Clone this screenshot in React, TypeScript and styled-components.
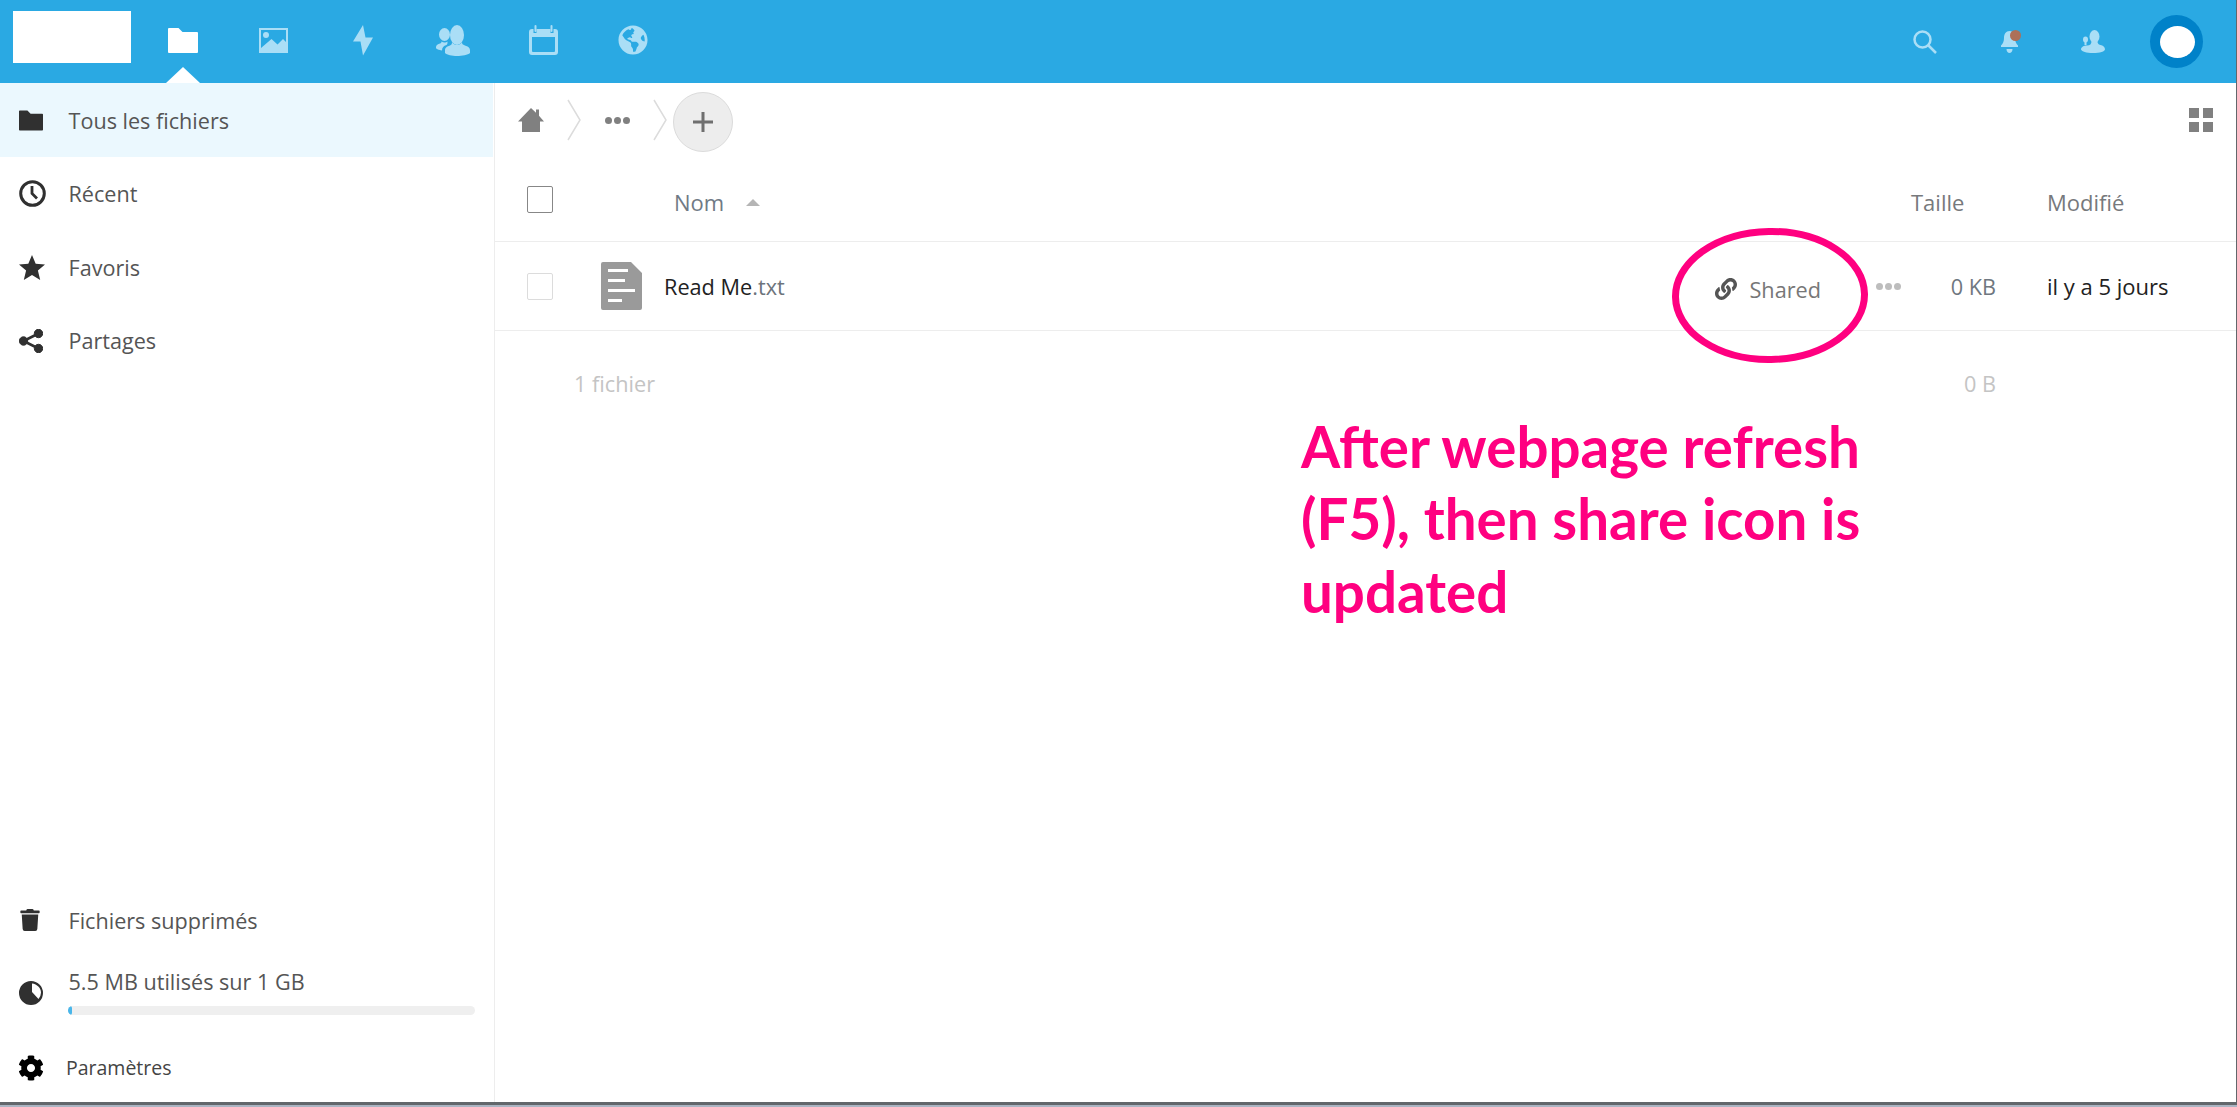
import React from 'react'
import styled, { createGlobalStyle } from 'styled-components'
import { FaCog, FaGlobeAmericas, FaLink, FaTrash } from 'react-icons/fa'

const GlobalStyle = createGlobalStyle`
  html, body {
    margin: 0;
    padding: 0;
    background: #fff;
  }
  * {
    box-sizing: border-box;
  }
`

const Page = styled.div`
  position: relative;
  width: 2237px;
  height: 1107px;
  overflow: hidden;
  display: flex;
  flex-direction: column;
  background: #aab4c2;
  font-family: 'Open Sans', 'Noto Sans', sans-serif;
`

const Window = styled.div`
  height: 1105px;
  display: flex;
  flex-direction: column;
  background: #fff;
  border-right: 1px solid #62676b;
  border-bottom: 3px solid #62676b;
`

const Header = styled.header`
  height: 83px;
  flex-shrink: 0;
  display: flex;
  align-items: center;
  background: #2aa9e3;
  padding-left: 13px;
  padding-right: 33px;
`

const Logo = styled.div`
  width: 118px;
  height: 52px;
  margin-top: -9px;
  margin-right: 7px;
  background: #fff;
`

const AppNav = styled.nav`
  display: flex;
  height: 100%;
`

const NavItem = styled.div<{ $active?: boolean }>`
  position: relative;
  width: 90px;
  height: 100%;
  display: flex;
  align-items: center;
  justify-content: center;
  padding-bottom: 3px;
  color: ${({ $active }) => ($active ? '#fff' : '#aadef6')};

  ${({ $active }) =>
    $active &&
    `
    &::after {
      content: '';
      position: absolute;
      left: 28px;
      bottom: 0;
      border-left: 17px solid transparent;
      border-right: 17px solid transparent;
      border-bottom: 16px solid #fff;
    }
  `}
`

const RightTools = styled.div`
  margin-left: auto;
  display: flex;
  align-items: center;
  color: #aadef6;
`

const ToolSlot = styled.div`
  position: relative;
  width: 84px;
  display: flex;
  justify-content: center;
`

const NotifyDot = styled.span`
  position: absolute;
  top: -1px;
  left: 43px;
  width: 11px;
  height: 11px;
  border-radius: 50%;
  background: #ad7058;
`

const Avatar = styled.div`
  width: 53px;
  height: 53px;
  margin-left: 15px;
  border-radius: 50%;
  background: #0082c9;
  display: flex;
  align-items: center;
  justify-content: center;

  &::before {
    content: '';
    width: 35px;
    height: 32px;
    margin-left: 2px;
    margin-top: 1px;
    border-radius: 50%;
    background: #fff;
  }
`

const Body = styled.div`
  flex: 1;
  display: flex;
  min-height: 0;
`

const Sidebar = styled.aside`
  width: 495px;
  flex-shrink: 0;
  display: flex;
  flex-direction: column;
  border-right: 1px solid #ededed;
`

const SideList = styled.div`
  display: flex;
  flex-direction: column;
  padding-right: 1px;
`

const SideItem = styled.div<{ $active?: boolean }>`
  height: ${({ $active }) => ($active ? 74 : 73.5)}px;
  display: flex;
  align-items: center;
  background: ${({ $active }) => ($active ? '#ebf8fe' : 'transparent')};
  color: #303030;
`

const SideIcon = styled.div`
  width: 68.5px;
  flex-shrink: 0;
  padding-left: 19px;
  display: flex;
  align-items: center;
  color: #303030;
`

const SideText = styled.span`
  font-size: 21.6px;
  color: #555;
  white-space: nowrap;
`

const SideFooter = styled.div`
  margin-top: auto;
  display: flex;
  flex-direction: column;
`

const TrashRow = styled(SideItem)`
  height: 52px;
`

const StorageRow = styled.div`
  display: flex;
  align-items: center;
  height: 70px;
  margin-top: 12px;
`

const StorageBody = styled.div`
  flex: 1;
  padding-right: 19px;
  margin-top: -5px;
`

const StorageBar = styled.div`
  height: 9px;
  margin-top: 10px;
  margin-left: -1px;
  border-radius: 5px;
  overflow: hidden;
  background: #efefef;
`

const StorageFill = styled.div`
  height: 100%;
  border-radius: 5px;
  background: #49b6ea;
`

const SettingsRow = styled.div`
  height: 54px;
  margin-top: 13px;
  margin-bottom: 7px;
  display: flex;
  align-items: center;
  padding-left: 18px;
  color: #000;
`

const SettingsText = styled.span`
  margin-left: 22px;
  margin-top: -2px;
  font-size: 19.5px;
  color: #444;
`

const Main = styled.main`
  flex: 1;
  min-width: 0;
  display: flex;
  flex-direction: column;
`

const Breadcrumb = styled.div`
  height: 74px;
  flex-shrink: 0;
  display: flex;
  align-items: center;
  padding-left: 23px;
  padding-right: 23px;
  color: #808080;
`

const Crumb = styled.div<{ $width: number }>`
  width: ${({ $width }) => $width}px;
  display: flex;
  align-items: center;
`

const CrumbDots = styled(Crumb)`
  padding-left: 24px;
`

const Dots = styled.div<{ $color?: string }>`
  display: flex;
  gap: 2px;

  & > span {
    width: 7px;
    height: 7px;
    border-radius: 50%;
    background: ${({ $color }) => $color ?? '#808080'};
  }
`

const AddButton = styled.div`
  width: 60px;
  height: 60px;
  margin-left: 6px;
  margin-top: 3px;
  border-radius: 50%;
  border: 1px solid #dbdbdb;
  background: #ededed;
  display: flex;
  align-items: center;
  justify-content: center;
  color: #6f6f6f;
`

const ViewToggle = styled.div`
  margin-left: auto;
  width: 24px;
  height: 24px;
  display: grid;
  grid-template-columns: 10px 10px;
  grid-template-rows: 10px 10px;
  gap: 4px;

  & > span {
    background: #808080;
  }
`

const TableRow = styled.div<{ $height: number }>`
  height: ${({ $height }) => $height}px;
  flex-shrink: 0;
  display: grid;
  grid-template-columns: 106px 1fr 95px 240px;
  align-items: center;
  border-bottom: 1px solid #ededed;
`

const CheckCell = styled.div`
  padding-left: 32px;
`

const Checkbox = styled.div<{ $strong?: boolean }>`
  width: 26px;
  height: 27px;
  border-radius: 2px;
  border: 1.5px solid ${({ $strong }) => ($strong ? '#878787' : '#dcdcdc')};
`

const NameHead = styled.div`
  display: flex;
  align-items: center;
  gap: 22px;
  padding: 5px 0 0 73px;
  font-size: 22px;
  color: #707a85;
`

const SortCaret = styled.span`
  margin-top: 2px;
  border-left: 7px solid transparent;
  border-right: 7px solid transparent;
  border-bottom: 7px solid #b5b5b5;
`

const ColHead = styled.div<{ $left: number }>`
  padding: 5px 0 0 ${({ $left }) => $left}px;
  font-size: 22px;
  color: #77797c;
  white-space: nowrap;
`

const NameCell = styled.div`
  display: flex;
  align-items: center;
  color: #9a9a9a;
`

const FileName = styled.span`
  margin-left: 22px;
  font-size: 21.7px;
  color: #222;
`

const Ext = styled.span`
  color: #6d747c;
`

const ShareAction = styled.div`
  margin-left: auto;
  margin-top: 6px;
  display: flex;
  align-items: center;
  gap: 12px;
  color: #555;
  font-size: 21.7px;
`

const ShareText = styled.span`
  color: #777;
`

const RowDots = styled.div`
  margin-left: 55px;
`

const SizeCell = styled.div<{ $muted?: boolean }>`
  text-align: right;
  font-size: 21.7px;
  color: ${({ $muted }) => ($muted ? '#c4c4c4' : '#6f7780')};
`

const DateCell = styled.div`
  padding-left: 51px;
  font-size: 22px;
  color: #222;
  white-space: nowrap;
`

const Summary = styled.div`
  height: 105px;
  display: grid;
  grid-template-columns: 79px 1327px 95px;
  align-items: center;
  font-size: 21.7px;
  color: #c4c4c4;
`

const SummaryCount = styled.div`
  grid-column: 2;
`

const Ring = styled.svg`
  position: absolute;
  left: 1660px;
  top: 220px;
  pointer-events: none;
`

const Note = styled.div`
  position: absolute;
  left: 1301px;
  top: 409.5px;
  width: 640px;
  font-family: Lato, 'Open Sans', sans-serif;
  font-size: 56.5px;
  font-weight: 700;
  line-height: 72.5px;
  color: #ff0080;
`

const FolderIcon = ({ w, h }: { w: number; h: number }) => (
  <svg width={w} height={h} viewBox="0 0 30 25" fill="currentColor">
    <path d="M1 0h9.500l4 4H29a1 1 0 0 1 1 1v19a1 1 0 0 1-1 1H1a1 1 0 0 1-1-1V1a1 1 0 0 1 1-1z" />
  </svg>
)

const ImageIcon = () => (
  <svg width="29" height="25" viewBox="0 0 29 25" fill="currentColor">
    <path fillRule="evenodd" d="M0 0h29v25H0zM2 2v18l10.500-9 6 5.500L24 11l3 3V2z" />
    <circle cx="7" cy="7" r="3" />
  </svg>
)

const BoltIcon = () => (
  <svg width="20" height="31" viewBox="0 0 20 31" fill="currentColor">
    <path d="M10 0 0 16.500h7.500l2.500 14L20 12.500h-7.500z" />
  </svg>
)

const ContactsIcon = () => (
  <svg width="34" height="31" viewBox="0 0 34 31" fill="currentColor">
    <ellipse cx="21" cy="10" rx="7" ry="10" />
    <path d="M16 17c1 2 3 3 5 3s4-1 5-3c0 2 .5 2.500 3 3.500 3 1.200 5 2 5 5v2.500c-2 2-8 3-13 3s-10-1-12-3v-2.500c0-3 2-3.800 5-5 2-1 2-2 2-4z" />
    <ellipse cx="8.500" cy="9.500" rx="5.500" ry="6.500" />
    <path d="M0 22c0-2 2-3 4-3.500 1-.3 1.500-1 1.500-2 1 .7 2 1 3 1 1.200 0 2-.3 3-1 0 2 0 2.500-1 3.500-3 1-4.500 2.500-4.500 5.500C3 25 0 24 0 23z" />
  </svg>
)

const UserAddIcon = () => (
  <svg width="24" height="23" viewBox="0 0 24 23" fill="currentColor">
    <ellipse cx="13.500" cy="6.500" rx="5" ry="6.500" />
    <ellipse cx="4.500" cy="9.500" rx="2.500" ry="3" />
    <path d="M3.500 12h2v3h-2z" />
    <path d="M10.500 11h6c0 2 .5 3.500 3 4 2.500.6 4.500 2 4.500 4.200 0 2.300-5 3.800-12 3.800S1 21.500 0 19.500C0 17 3 15.500 6 15.500c3 0 4.500-1.500 4.500-4.500z" />
  </svg>
)

const CalendarIcon = () => (
  <svg width="29" height="30" viewBox="0 0 29 30" fill="currentColor">
    <path fillRule="evenodd" d="M3 4h1.500v4h3V4h14v4h3V4H26a3 3 0 0 1 3 3v20a3 3 0 0 1-3 3H3a3 3 0 0 1-3-3V7a3 3 0 0 1 3-3zM3 12v14a1 1 0 0 0 1 1h21a1 1 0 0 0 1-1V12z" />
    <rect x="5.500" width="2" height="7" rx="1" />
    <rect x="21.500" width="2" height="7" rx="1" />
  </svg>
)

const SearchIcon = () => (
  <svg width="24" height="24" viewBox="0 0 24 24" fill="none" stroke="currentColor" strokeWidth="2.500">
    <circle cx="9.500" cy="9.500" r="8" />
    <path d="M15 15l8 8" />
  </svg>
)

const BellIcon = () => (
  <svg width="17" height="22" viewBox="0 0 17 22" fill="currentColor">
    <path d="M8.500 0C12 0 14 3 14 7c0 3.500 1 5.500 3 7.500v1.500H0v-1.500c2-2 3-4 3-7.500 0-4 2-7 5.500-7z" />
    <path d="M5.500 18h6c0 2.500-1.500 4-3 4s-3-1.500-3-4z" />
  </svg>
)

const ClockIcon = () => (
  <svg width="27" height="27" viewBox="0 0 27 27" fill="none" stroke="currentColor">
    <circle cx="13.500" cy="13.500" r="11.800" strokeWidth="3" />
    <path d="M13 6v7.500l5 5" strokeWidth="2.800" />
  </svg>
)

const StarIcon = () => (
  <svg width="26" height="25" viewBox="0 0 26 25" fill="currentColor">
    <path d="M13 0l3.700 8.800 9.300.7-7.100 6.100 2.300 9.400L13 20l-8.200 5 2.300-9.400L0 9.500l9.300-.7z" />
  </svg>
)

const ShareIcon = () => (
  <svg width="24" height="24" viewBox="0 0 24 24" fill="currentColor" stroke="currentColor">
    <circle cx="4.500" cy="12" r="4.200" />
    <circle cx="19.500" cy="4.500" r="4.200" />
    <circle cx="19.500" cy="19.500" r="4.200" />
    <path d="M19.500 4.500 4.500 12l15 7.500" fill="none" strokeWidth="2.600" />
  </svg>
)

const PieIcon = () => (
  <svg width="24" height="24" viewBox="0 0 24 24" fill="currentColor">
    <path fillRule="evenodd" d="M12 0a12 12 0 1 1 0 24 12 12 0 0 1 0-24zM13 2.500V11l6.500 7a10 10 0 0 0 2.500-6.500C22 7 18 3 13 2.500z" />
  </svg>
)

const HomeIcon = () => (
  <svg width="26" height="24" viewBox="0 0 26 24" fill="currentColor">
    <path d="M13 0l5 4.800V1.500h3v6.200l5 5.800h-4V24H4V13.500H0z" />
  </svg>
)

const CrumbArrow = () => (
  <svg width="14" height="42" viewBox="0 0 14 42" fill="none" stroke="#dcdcdc" strokeWidth="1.500">
    <path d="M1 1l12 20L1 41" />
  </svg>
)

const PlusIcon = () => (
  <svg width="20" height="20" viewBox="0 0 20 20" fill="currentColor">
    <path d="M8.500 0h3v8.500H20v3h-8.500V20h-3v-8.500H0v-3h8.500z" />
  </svg>
)

const TextFileIcon = () => (
  <svg width="41" height="48" viewBox="0 0 41 48" fill="currentColor">
    <path
      fillRule="evenodd"
      d="M2 0h28l11 11v35a2 2 0 0 1-2 2H2a2 2 0 0 1-2-2V2a2 2 0 0 1 2-2zM7 7v3h20V7zM7 17v3h17v-3zM7 27v3h27v-3zM7 37v3h14v-3z"
    />
  </svg>
)

const navIcons = [
  <FolderIcon key="files" w={30} h={25} />,
  <ImageIcon key="photos" />,
  <BoltIcon key="activity" />,
  <ContactsIcon key="contacts" />,
  <CalendarIcon key="calendar" />,
  <FaGlobeAmericas key="maps" size={30} />,
]

const sideItems = [
  { label: 'Récent', icon: <ClockIcon /> },
  { label: 'Favoris', icon: <StarIcon /> },
  { label: 'Partages', icon: <ShareIcon /> },
]

const ThreeDots = ({ color }: { color?: string }) => (
  <Dots $color={color}>
    <span />
    <span />
    <span />
  </Dots>
)

export default function App() {
  return (
    <>
      <GlobalStyle />
      <Page>
        <Window>
          <Header>
            <Logo />
            <AppNav>
              {navIcons.map((icon, i) => (
                <NavItem key={i} $active={i === 0}>
                  {icon}
                </NavItem>
              ))}
            </AppNav>
            <RightTools>
              <ToolSlot>
                <SearchIcon />
              </ToolSlot>
              <ToolSlot>
                <BellIcon />
                <NotifyDot />
              </ToolSlot>
              <ToolSlot>
                <UserAddIcon />
              </ToolSlot>
              <Avatar />
            </RightTools>
          </Header>
          <Body>
            <Sidebar>
              <SideList>
                <SideItem $active>
                  <SideIcon>
                    <FolderIcon w={24} h={21} />
                  </SideIcon>
                  <SideText>Tous les fichiers</SideText>
                </SideItem>
                {sideItems.map(item => (
                  <SideItem key={item.label}>
                    <SideIcon>{item.icon}</SideIcon>
                    <SideText>{item.label}</SideText>
                  </SideItem>
                ))}
              </SideList>
              <SideFooter>
                <TrashRow>
                  <SideIcon>
                    <FaTrash size={22} />
                  </SideIcon>
                  <SideText>Fichiers supprimés</SideText>
                </TrashRow>
                <StorageRow>
                  <SideIcon>
                    <PieIcon />
                  </SideIcon>
                  <StorageBody>
                    <SideText>5.5 MB utilisés sur 1 GB</SideText>
                    <StorageBar>
                      <StorageFill style={{ width: '1%' }} />
                    </StorageBar>
                  </StorageBody>
                </StorageRow>
                <SettingsRow>
                  <FaCog size={26} />
                  <SettingsText>Paramètres</SettingsText>
                </SettingsRow>
              </SideFooter>
            </Sidebar>
            <Main>
              <Breadcrumb>
                <Crumb $width={49}>
                  <HomeIcon />
                </Crumb>
                <CrumbArrow />
                <CrumbDots $width={72}>
                  <ThreeDots />
                </CrumbDots>
                <CrumbArrow />
                <AddButton>
                  <PlusIcon />
                </AddButton>
                <ViewToggle>
                  <span />
                  <span />
                  <span />
                  <span />
                </ViewToggle>
              </Breadcrumb>
              <TableRow $height={85}>
                <CheckCell>
                  <Checkbox $strong />
                </CheckCell>
                <NameHead>
                  Nom
                  <SortCaret />
                </NameHead>
                <ColHead $left={10}>Taille</ColHead>
                <ColHead $left={51}>Modifié</ColHead>
              </TableRow>
              <TableRow $height={89}>
                <CheckCell>
                  <Checkbox />
                </CheckCell>
                <NameCell>
                  <TextFileIcon />
                  <FileName>
                    Read Me<Ext>.txt</Ext>
                  </FileName>
                  <ShareAction>
                    <FaLink size={22} />
                    <ShareText>Shared</ShareText>
                  </ShareAction>
                  <RowDots>
                    <ThreeDots color="#bdbdbd" />
                  </RowDots>
                </NameCell>
                <SizeCell>0 KB</SizeCell>
                <DateCell>il y a 5 jours</DateCell>
              </TableRow>
              <Summary>
                <SummaryCount>1 fichier</SummaryCount>
                <SizeCell $muted>0 B</SizeCell>
              </Summary>
            </Main>
          </Body>
        </Window>
        <Ring width="220" height="156" viewBox="0 0 220 156">
          <ellipse cx="110" cy="75.500" rx="94.500" ry="64" fill="none" stroke="#ff0080" strokeWidth="7" transform="rotate(-1 110 75.500)" />
        </Ring>
        <Note>
          After webpage refresh
          <br />
          (F5), then share icon is
          <br />
          updated
        </Note>
      </Page>
    </>
  )
}
